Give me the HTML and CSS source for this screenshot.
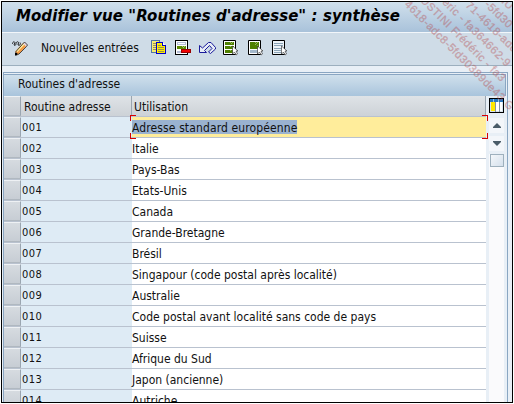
FILE: index.html
```html
<!DOCTYPE html>
<html lang="fr">
<head>
<meta charset="utf-8">
<title>Routines d'adresse</title>
<link rel="stylesheet" href="styles.css">
</head>
<body>
<main class="window">
  <h1 class="title"><span>Modifier vue "Routines d'adresse" : synthèse</span></h1>
  <div class="toolbar">
    <svg class="icon edit" viewBox="0 0 17 16" width="17" height="16">
      <path d="M.5 4C.5 2 2 1 3 2.500L2 5C3 6 4 5 4 3.500 4 2 6 1 6.500 2.500L6 5C8 6 9 4 8 2.500" fill="none" stroke="#222"/>
      <path d="M3.500 11 11 3l3.500 3-7.500 8-3.500 1z" fill="#f39a45"/>
      <path d="m4 11 7-7.500 1.500 1L5.500 12z" fill="#fff0a0"/><path d="m11 3.500 1.500-1.500 3 2.500-1.500 2z" fill="#e6d3da"/>
      <path d="M14.500 6.500 7 14l-3.500 1.500.5-4 8.500-9.500L15.500 5z" fill="none" stroke="#222" stroke-width=".8"/><path d="M3 13h2.500l-.5 2H3z" fill="#000"/>
    </svg>
    <span class="new">Nouvelles entrées</span>
    <svg class="icon copy" viewBox="0 0 16 16" width="16" height="16" shape-rendering="crispEdges">
      <path d="M.5.500h8v12h-8z" fill="#f8ee70" stroke="#5377a5"/><path d="M2 3h3M2 5h3M2 7h3M2 9h3" stroke="#999060" transform="translate(0 .5)"/>
      <path d="M5.500 2.500h6l3 3v8h-9z" fill="#ffec00" stroke="#0000c8"/><path d="M11.500 2.500v3h3" fill="#fff" stroke="#0000c8"/><path d="M7 5.500h3M7 7.500h6M7 9.500h6M7 11.500h6" stroke="#99904a"/>
    </svg>
    <svg class="icon remove" viewBox="0 0 16 16" width="16" height="16" shape-rendering="crispEdges">
      <path d="M.5.500h12v14H.5z" fill="#fff" stroke="#000"/><path d="M2 2h9v3H2zM2 11h9v2H2z" fill="#b4bdd6"/><path d="M3 3h7v1H3z" fill="#fff"/><path d="M2 6h9v3H2z" fill="#5c8a00"/><path d="M7 6h1v1H7zM9 6h1v1H9zM8 7h1v1H8z" fill="#a3bd73"/><path d="M6.500 9.500h9v3h-9z" fill="#f00000" stroke="#900"/>
    </svg>
    <svg class="icon undo" viewBox="0 0 17 13" width="17" height="13">
      <path d="M.5 4.500v7h7L5.500 9.500 10.500 4.500 13 7.500 9.500 11l2 1.500L16.500 8V6.500L12 1.500h-2.500L3.500 7z" fill="#e7edf5" stroke="#1a1a9b"/>
    </svg>
    <svg class="icon all" viewBox="0 0 15 16" width="15" height="16">
      <path d="M.5.500h12v14H.5z" fill="#fff" stroke="#000"/><path d="M2 2h9v3H2zM2 6h9v3H2zM2 10h9v3H2z" fill="#4f8000"/><path d="M7 2h1v1H7zM9 2h1v1H9zM8 3h1v1H8zM7 6h1v1H7zM9 7h1v1H9zM7 10h1v1H7z" fill="#93b75a"/><path class="pointer" d="M9.500 6v8l2-2 1.500 3 1.500-1-1.500-3h2z"/>
    </svg>
    <svg class="icon block" viewBox="0 0 15 16" width="15" height="16">
      <path d="M.5.500h12v14H.5z" fill="#fff" stroke="#000"/><path d="M2 2h9v7H2z" fill="#4f8000"/><path d="M7 2h1v1H7zM9 2h1v1H9zM8 3h1v1H8zM7 4h1v1H7zM9 5h1v1H9z" fill="#93b75a"/><path d="M2 10h9v3H2z" fill="#a3b8cc"/><path class="pointer" d="M9.500 6v8l2-2 1.500 3 1.500-1-1.500-3h2z"/>
    </svg>
    <svg class="icon none" viewBox="0 0 15 16" width="15" height="16">
      <path d="M.5.500h12v14H.5z" fill="#edf3f8" stroke="#000"/><path d="M2 3.500h9M2 5.500h9M2 8.500h8M2 10.500h7M2 12.500h8" stroke="#8ba4b8"/><path class="pointer" d="M9.500 6v8l2-2 1.500 3 1.500-1-1.500-3h2z"/>
    </svg>
  </div>
  <section class="panel">
    <h2 class="caption">Routines d'adresse</h2>
    <div class="body">
      <div class="grid">
        <div class="row head"><i></i><b>Routine adresse</b><span>Utilisation</span></div>
        <div class="row active"><i></i><b>001</b><span><mark>Adresse standard européenne</mark></span>
          <svg class="focus" viewBox="0 0 358 24" width="358" height="24" shape-rendering="crispEdges"><path d="M6 .5H.5V6M.5 18v5.500H6M352 .5h5.500V6M357.500 18v5.500H352" fill="none" stroke="#d80000"/></svg></div>
        <div class="row"><i></i><b>002</b><span>Italie</span></div>
        <div class="row"><i></i><b>003</b><span>Pays-Bas</span></div>
        <div class="row"><i></i><b>004</b><span>Etats-Unis</span></div>
        <div class="row"><i></i><b>005</b><span>Canada</span></div>
        <div class="row"><i></i><b>006</b><span>Grande-Bretagne</span></div>
        <div class="row"><i></i><b>007</b><span>Brésil</span></div>
        <div class="row"><i></i><b>008</b><span>Singapour (code postal après localité)</span></div>
        <div class="row"><i></i><b>009</b><span>Australie</span></div>
        <div class="row"><i></i><b>010</b><span>Code postal avant localité sans code de pays</span></div>
        <div class="row"><i></i><b>011</b><span>Suisse</span></div>
        <div class="row"><i></i><b>012</b><span>Afrique du Sud</span></div>
        <div class="row"><i></i><b>013</b><span>Japon (ancienne)</span></div>
        <div class="row"><i></i><b>014</b><span>Autriche</span></div>
      </div>
      <aside class="side">
        <svg class="config" viewBox="0 0 15 15" width="15" height="15" shape-rendering="crispEdges"><path d="M.5.500h14v14H.5z" fill="#d9e4ee" stroke="#000"/><path d="M1 1h13v3H1z" fill="#2878c0"/><path d="M4 1h1v3H4zM9 1h1v3H9z" fill="#8fc4ef"/><path d="M2 4h4v9H2z" fill="#ffe800"/><path d="M7 4h3v9H7zM11 4h2v9h-2z" fill="#fff"/><path d="M6 4h1v10H6zM10 4h1v10h-1z" fill="#8494a5"/></svg>
        <div class="arrow"><svg viewBox="0 0 8 5" width="8" height="5"><path d="M4 0 8 4v1H0V4z" fill="#4a5c68"/></svg></div>
        <div class="arrow down"><svg viewBox="0 0 8 5" width="8" height="5"><path d="M0 0h8v1L4 5 0 1z" fill="#4a5c68"/></svg></div>
        <div class="track"><div class="thumb"></div></div>
      </aside>
    </div>
  </section>
  <svg class="watermark" viewBox="0 0 114 140" width="114" height="140">
    <text transform="translate(4 5) rotate(45)">4618-adc8-5fd30389de43 G</text>
    <text transform="translate(20 1) rotate(45)">USTINI Frédéric - fa3</text>
    <text transform="translate(37 -2) rotate(45)">déric - fa364662-9</text>
    <text transform="translate(65 6) rotate(44)">71-4618-adc</text>
    <text transform="translate(84 5) rotate(44)">-5fd30</text>
    <text transform="translate(101 2) rotate(44)">IU</text>
  </svg>
</main>
</body>
</html>
```
FILE: styles.css
```css
* { box-sizing: border-box; }
body { margin: 0; background: #fff; padding: 1px; font: 12px/21px "DejaVu Sans Condensed", "DejaVu Sans", sans-serif; font-stretch: condensed; color: #111; letter-spacing: 0; }
.window { position: relative; width: 512px; height: 402px; border: 1px solid #000; background: #e8eff6; overflow: hidden; }
.title { margin: 0; height: 31px; padding-left: 14px; border-bottom: 1px solid #f2f6fa; background: linear-gradient(#d0e0ec, #a9c2da); font: italic bold 15px/29px "DejaVu Sans", sans-serif; font-stretch: normal; color: #000; letter-spacing: .07px; white-space: nowrap; }
.toolbar { height: 33px; display: flex; align-items: flex-start; background: #cfdce7; border-bottom: 1px solid #9cafbe; padding: 7px 0 0 10px; }
.icon { flex: none; }
.pointer { fill: #fff; stroke: #000; stroke-width: .5; }
.new { width: 98px; margin: -2px 12px 0 12px; white-space: nowrap; letter-spacing: .05px; }
.remove { margin-left: 8px; }
.undo { margin: 1px 0 0 8px; }
.all { margin-left: 7px; }
.block { margin-left: 10px; }
.none { margin-left: 9px; }
.panel { margin: 6px 4px 0 1px; height: 340px; border: 1px solid #8aa6c2; border-bottom: 0; }
.caption { margin: 1px 1px 0 0; height: 22px; padding-left: 14px; border-top: 1px solid #8aa6c2; border-right: 1px solid #8aa6c2; background: linear-gradient(#d0e0ec, #a9c4dc); font-size: 12px; font-weight: normal; line-height: 18px; }
.body { display: flex; }
.grid { width: 482px; flex: none; }
.row { position: relative; height: 21px; display: flex; border-bottom: 1px solid #b9c2cf; background: #fff; white-space: nowrap; }
.row i { width: 17px; border-right: 1px solid #9aa5b0; border-bottom: 1px solid #b0b8c0; border-top: 1px solid #eef1f4; background: linear-gradient(#d6dbe0, #c7cdd4); }
.row b { width: 111px; padding-left: 1px; font-size: 11px; letter-spacing: .5px; font-weight: normal; background: #deebf5; }
.row span { flex: 1; padding-top: 1px; }
.row.active span { padding-top: 0; background: #ffed9b; }
.head, .head b { background: linear-gradient(#dfe3e7, #cdd2d7); }
.head b { padding: 1px 0 0 3px; font-size: 12px; letter-spacing: 0; border-right: 1px solid #9aa5b0; }
.head span { padding-left: 2px; border-right: 1px solid #9aa5b0; }
mark { display: inline-block; height: 14px; margin-top: 3px; line-height: 16px; background: #9ab2d0; color: #111; vertical-align: top; letter-spacing: .12px; }
.focus { position: absolute; z-index: 1; left: 126px; top: -2px; }
.side { width: 15px; margin-left: 3px; }
.config { display: block; margin: 2px 0 5px; }
.arrow { height: 15px; margin-bottom: 3px; background: #f3f6fa; display: flex; align-items: center; justify-content: center; }
.track { height: 260px; background: #fafafc; }
.thumb { width: 14px; height: 13px; margin-left: 1px; border: 1px solid #9eb0bd; background: linear-gradient(135deg, #f4f7fa, #d5e0ec); }
.watermark { position: absolute; left: 398px; top: -2px; font: 11px "Liberation Sans", sans-serif; letter-spacing: .5px; fill: #b54d50; stroke: #b54d50; stroke-width: .3; opacity: .42; }
```
